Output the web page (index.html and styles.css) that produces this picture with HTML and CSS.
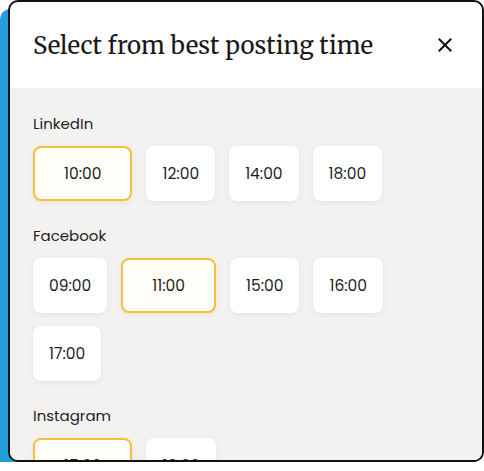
FILE: index.html
```html
<!DOCTYPE html>
<html lang="en">
<head>
    <meta charset="UTF-8">
    <meta name="viewport" content="width=device-width, initial-scale=1.0">
    <title>Best posting time</title>
    <link rel="stylesheet" href="styles.css">
</head>
<body>
    <div class="page">
        <div class="modal">
            <div class="modal-header">
                <h2 class="modal-title">Select from best posting time</h2>
                <button class="close-btn" type="button" aria-label="Close">
                    <svg width="14" height="14" viewBox="0 0 14 14">
                        <path d="M1.5 1.5 L12.5 12.5 M12.5 1.5 L1.5 12.5" stroke="#111" stroke-width="2" stroke-linecap="square"/>
                    </svg>
                </button>
            </div>
            <div class="modal-body">
                <div class="network">
                    <p class="network-name">LinkedIn</p>
                    <div class="slots">
                        <button class="slot selected">10:00</button>
                        <button class="slot">12:00</button>
                        <button class="slot">14:00</button>
                        <button class="slot">18:00</button>
                    </div>
                </div>
                <div class="network">
                    <p class="network-name">Facebook</p>
                    <div class="slots">
                        <button class="slot">09:00</button>
                        <button class="slot selected">11:00</button>
                        <button class="slot">15:00</button>
                        <button class="slot">16:00</button>
                        <button class="slot">17:00</button>
                    </div>
                </div>
                <div class="network">
                    <p class="network-name">Instagram</p>
                    <div class="slots">
                        <button class="slot selected">15:00</button>
                        <button class="slot">19:00</button>
                    </div>
                </div>
            </div>
        </div>
    </div>
</body>
</html>
```

FILE: styles.css
```css
body {
    margin: 0;
    padding: 0;
    background-color: #fff;
    font-family: Poppins, Inter, "Noto Sans", sans-serif;
    color: #1f1f1f;
}

.page {
    padding-left: 8px;
}

.modal {
    box-sizing: border-box;
    width: 476px;
    height: 462px;
    border: 2px solid #111;
    border-radius: 10px;
    background-color: #fff;
    box-shadow: -8px 9px 0 #259dd9;
    overflow: hidden;
    display: flex;
    flex-direction: column;
}

.modal-header {
    height: 86px;
    flex-shrink: 0;
    display: flex;
    align-items: center;
    justify-content: space-between;
    padding: 0 26px 0 23px;
}

.modal-title {
    margin: 0;
    font-family: Merriweather, "DejaVu Serif", serif;
    font-weight: normal;
    font-size: 24px;
    color: #1a1a1a;
}

.close-btn {
    border: none;
    background: none;
    padding: 4px;
    cursor: pointer;
    display: flex;
}

.modal-body {
    flex: 1;
    background-color: #f3f2f0;
    padding: 25px 23px;
    overflow: hidden;
}

.network {
    margin-bottom: 24px;
}

.network-name {
    margin: 0 0 11px;
    font-size: 15px;
    line-height: 22px;
}

.slots {
    display: flex;
    flex-wrap: wrap;
    gap: 13px 14px;
}

.slot {
    height: 55px;
    padding: 0 16px;
    border: none;
    border-radius: 8px;
    background-color: #fff;
    box-shadow: 0 2px 6px rgba(0, 0, 0, 0.06);
    font-family: inherit;
    font-size: 15.5px;
    color: #1f1f1f;
    cursor: pointer;
}

.slot.selected {
    padding: 0 29px;
    border: 2px solid #f8c03a;
    background-color: #fffdf8;
}
```
